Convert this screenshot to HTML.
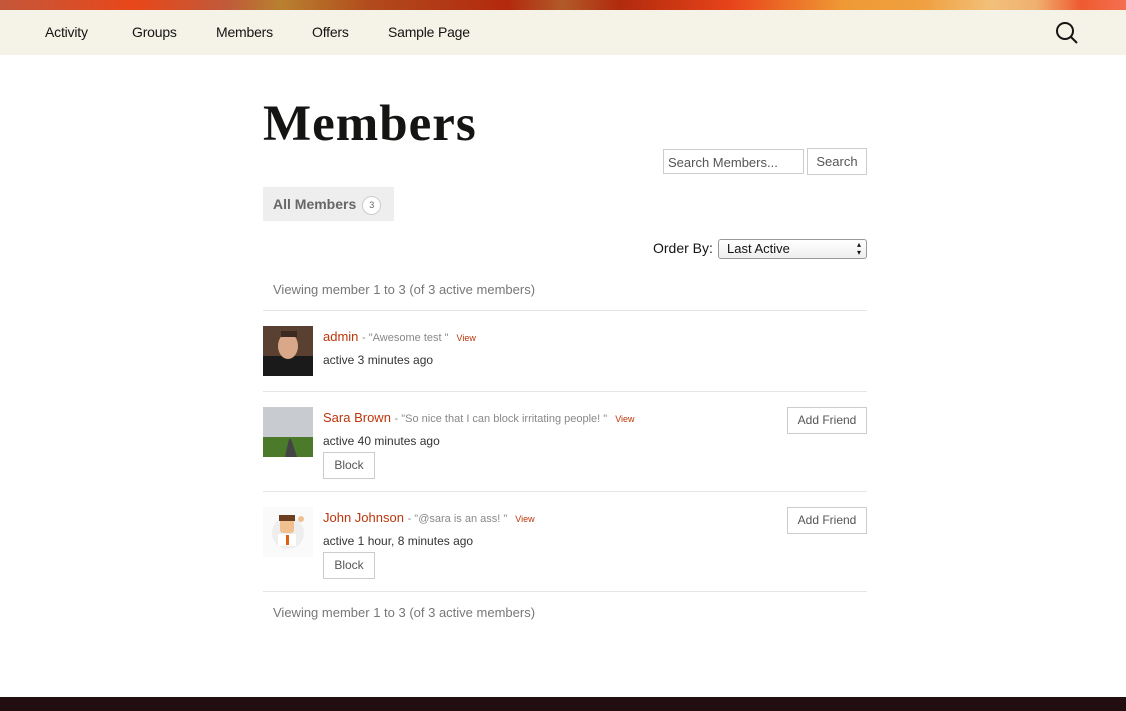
<!DOCTYPE html>
<html><head><meta charset="utf-8"><style>
*{margin:0;padding:0;box-sizing:border-box}
body{width:1126px;height:711px;overflow:hidden;background:#fff;font-family:"Liberation Sans",sans-serif;color:#141412;position:relative}
.top{position:absolute;left:0;top:0;width:1126px;height:10px;background:linear-gradient(90deg,#c4573a 0%,#e8471a 12%,#c05a3a 20%,#b8802f 25%,#b24a1c 33%,#b3290e 45%,#b25a28 50%,#b12a0d 55%,#e8441a 65%,#ef9a35 75%,#f0a040 82%,#f2c07a 88%,#f0b070 92%,#ee5a30 96%,#f47050 100%)}
.nav{position:absolute;left:0;top:10px;width:1126px;height:45px;background:#f5f3e7}
.nav a{position:absolute;top:14px;font-size:14px;color:#141412;text-decoration:none;letter-spacing:-0.2px}
h1{position:absolute;left:263px;top:95px;font-family:"Liberation Serif",serif;font-weight:bold;font-size:51px;letter-spacing:1px;color:#141412}
.input{position:absolute;border:1px solid #ccc;font-size:13px;color:#555;padding:5px 4px}
.btn{position:absolute;border:1px solid #ccc;font-size:12px;color:#555;text-align:center;background:#fff}
.tab{position:absolute;left:263px;top:187px;width:131px;height:34px;background:#eee;font-weight:bold;color:#666;font-size:14px;padding:9px 10px;white-space:nowrap}
.tab span{display:inline-block;width:19px;height:19px;border:1px solid #ccc;border-radius:50%;background:#fff;font-size:9px;font-weight:normal;text-align:center;line-height:17px;margin-left:6px;vertical-align:middle}
.t{position:absolute;font-size:13px;color:#555;white-space:nowrap}
.hr{position:absolute;left:263px;width:604px;height:1px;background:#e5e5e5}
.name{color:#bc360a;font-size:13px}
.q{color:#888;font-size:11px}
.v{color:#bc360a;font-size:9px;margin-left:8px}
.av{position:absolute;left:263px;width:50px;height:50px}
</style></head><body>
<div class="top"></div>
<div class="nav">
<a style="left:45px">Activity</a><a style="left:132px">Groups</a><a style="left:216px">Members</a><a style="left:312px">Offers</a><a style="left:388px">Sample Page</a>
<svg style="position:absolute;left:1055px;top:11px" width="24" height="24" viewBox="0 0 24 24"><circle cx="10" cy="10" r="8" fill="none" stroke="#141412" stroke-width="2"/><line x1="16" y1="16" x2="22" y2="22" stroke="#141412" stroke-width="2"/></svg>
</div>
<h1>Members</h1>
<div class="input" style="left:663px;top:149px;width:141px;height:25px">Search Members...</div>
<div class="btn" style="left:807px;top:148px;width:60px;height:27px;line-height:25px;font-size:13px">Search</div>
<div class="tab">All Members<span>3</span></div>
<div class="t" style="left:653px;top:240px;font-size:14px;color:#141412">Order By:</div>
<div style="position:absolute;left:718px;top:239px;width:149px;height:20px;border:1px solid #999;border-radius:3px;background:linear-gradient(#fff,#eee);font-size:13px;padding:1px 8px;color:#141412">Last Active<span style="position:absolute;right:5px;top:1px;font-size:8px;line-height:8px">▴<br>▾</span></div>
<div class="t" style="left:273px;top:282px;color:#777">Viewing member 1 to 3 (of 3 active members)</div>
<div class="hr" style="top:310px"></div>
<svg class="av" style="top:326px" viewBox="0 0 50 50"><rect width="50" height="50" fill="#5a4030"/><rect x="0" y="30" width="50" height="20" fill="#1a1a1a"/><ellipse cx="25" cy="20" rx="10" ry="13" fill="#d8a888"/><rect x="18" y="5" width="16" height="6" fill="#3a2a20"/></svg>
<div class="t" style="left:323px;top:329px"><span class="name">admin</span> <span class="q">- "Awesome test "</span><span class="v">View</span></div>
<div class="t" style="left:323px;top:353px;font-size:12px;color:#333">active 3 minutes ago</div>
<div class="hr" style="top:391px"></div>
<svg class="av" style="top:407px" viewBox="0 0 50 50"><rect width="50" height="32" fill="#c8ccd0"/><rect y="30" width="50" height="20" fill="#4a7a2a"/><polygon points="22,50 34,50 28,32 26,32" fill="#444"/></svg>
<div class="t" style="left:323px;top:410px"><span class="name">Sara Brown</span> <span class="q">- "So nice that I can block irritating people! "</span><span class="v">View</span></div>
<div class="t" style="left:323px;top:434px;font-size:12px;color:#333">active 40 minutes ago</div>
<div class="btn" style="left:323px;top:452px;width:52px;height:27px;line-height:25px">Block</div>
<div class="btn" style="left:787px;top:407px;width:80px;height:27px;line-height:25px">Add Friend</div>
<div class="hr" style="top:491px"></div>
<svg class="av" style="top:507px" viewBox="0 0 50 50"><rect width="50" height="50" fill="#fafafa"/><circle cx="25" cy="26" r="16" fill="#eee"/><rect x="17" y="12" width="14" height="14" rx="3" fill="#f0c090"/><rect x="16" y="8" width="16" height="6" fill="#6a4020"/><rect x="15" y="27" width="18" height="12" fill="#fff"/><rect x="23" y="28" width="3" height="10" fill="#e06010"/><circle cx="38" cy="12" r="3" fill="#f0c090"/></svg>
<div class="t" style="left:323px;top:510px"><span class="name">John Johnson</span> <span class="q">- "@sara is an ass! "</span><span class="v">View</span></div>
<div class="t" style="left:323px;top:534px;font-size:12px;color:#333">active 1 hour, 8 minutes ago</div>
<div class="btn" style="left:323px;top:552px;width:52px;height:27px;line-height:25px">Block</div>
<div class="btn" style="left:787px;top:507px;width:80px;height:27px;line-height:25px">Add Friend</div>
<div class="hr" style="top:591px"></div>
<div class="t" style="left:273px;top:605px;color:#777">Viewing member 1 to 3 (of 3 active members)</div>
<div style="position:absolute;left:0;top:697px;width:1126px;height:14px;background:#220e10"></div>
</body></html>
